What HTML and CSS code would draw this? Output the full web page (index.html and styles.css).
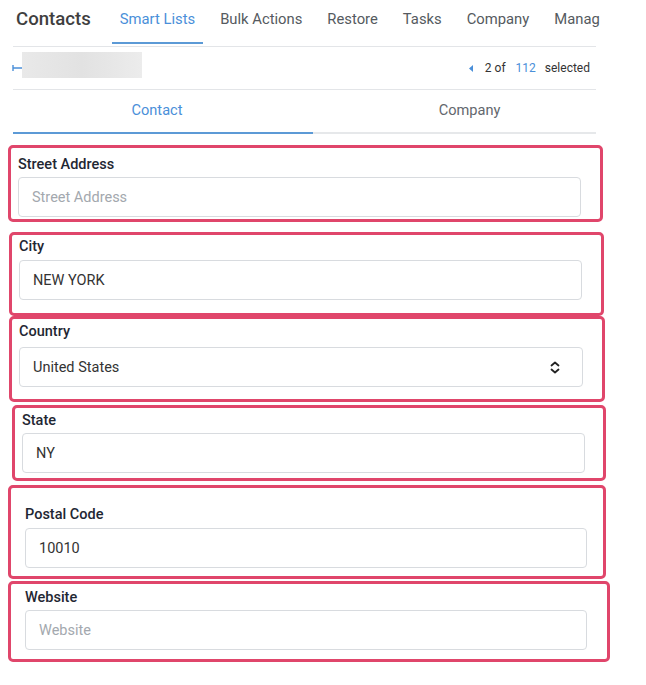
FILE: index.html
```html
<!DOCTYPE html>
<html lang="en">
<head>
<meta charset="utf-8">
<title>Contacts</title>
<link rel="stylesheet" href="styles.css">
</head>
<body>
<div class="page">
  <header class="topbar">
    <h1 class="brand">Contacts</h1>
    <nav class="nav">
      <a class="nav-item is-active">Smart Lists</a>
      <a class="nav-item">Bulk Actions</a>
      <a class="nav-item">Restore</a>
      <a class="nav-item">Tasks</a>
      <a class="nav-item">Company</a>
      <a class="nav-item nav-item-last">Manag</a>
    </nav>
  </header>

  <div class="subbar">
    <div class="subbar-left">
      <svg class="back-icon" width="11" height="8" viewBox="0 0 11 8"><path d="M1 1v6M1 4h9" stroke="#4a8fd9" stroke-width="1.4" fill="none"/></svg>
      <div class="blurred"></div>
    </div>
    <div class="pager">
      <svg class="pager-caret" width="4" height="7" viewBox="0 0 4 7"><path d="M4 0v7L0 3.5z" fill="#4a8fd9"/></svg>
      <span class="pager-text">2 of</span>
      <span class="pager-total">112</span>
      <span class="pager-text">selected</span>
    </div>
  </div>

  <div class="tabs">
    <div class="tab tab-left is-active">Contact</div>
    <div class="tab tab-right">Company</div>
  </div>
</div>

<div class="fields">
  <div class="field field-1">
    <label class="field-label">Street Address</label>
    <div class="input input-a"><span class="placeholder">Street Address</span></div>
  </div>
  <div class="field field-2">
    <label class="field-label">City</label>
    <div class="input input-a">NEW YORK</div>
  </div>
  <div class="field field-3">
    <label class="field-label">Country</label>
    <div class="input input-a select">
      <span>United States</span>
      <svg class="select-icon" width="10" height="13" viewBox="0 0 10 13"><path d="M1.5 4.5L5 1.5l3.5 3M1.5 8.5L5 11.5l3.5-3" stroke="#222" stroke-width="1.8" fill="none" stroke-linecap="round" stroke-linejoin="round"/></svg>
    </div>
  </div>
  <div class="field field-4">
    <label class="field-label">State</label>
    <div class="input input-b">NY</div>
  </div>
  <div class="field field-5">
    <label class="field-label">Postal Code</label>
    <div class="input input-c">10010</div>
  </div>
  <div class="field field-6">
    <label class="field-label">Website</label>
    <div class="input input-c"><span class="placeholder">Website</span></div>
  </div>
</div>
</body>
</html>
```

FILE: styles.css
```css
* { box-sizing: border-box; }
html, body { margin: 0; padding: 0; background: #ffffff; }
body {
  font-family: Roboto, "Liberation Sans", Arial, sans-serif;
  color: #333;
  width: 646px;
  height: 685px;
  overflow: hidden;
}

.page {
  width: 583px;
  margin-left: 13px;
}

/* top bar */
.topbar {
  display: flex;
  align-items: flex-start;
  height: 47px;
  border-bottom: 1px solid #e3e5e8;
}
.brand {
  margin: 0;
  padding: 7px 0 0 3px;
  font-size: 18.6px;
  line-height: 24px;
  font-weight: 500;
  color: #3f3f3f;
  white-space: nowrap;
}
.nav {
  display: flex;
  margin-left: 21px;
  gap: 9px;
  white-space: nowrap;
}
.nav-item {
  display: block;
  padding: 9px 8px 0;
  height: 44px;
  font-size: 14.8px;
  line-height: 21px;
  color: #555a60;
  border-bottom: 2px solid transparent;
}
.nav-item-last { padding-right: 0; }
.nav-item.is-active {
  color: #4a8fd9;
  border-bottom-color: #5c9ad6;
}

/* sub bar */
.subbar {
  display: flex;
  justify-content: space-between;
  align-items: flex-start;
  height: 43px;
  border-bottom: 1px solid #e3e5e8;
}
.subbar-left {
  display: flex;
  align-items: flex-start;
  margin-left: -1px;
  padding-top: 5px;
}
.back-icon { margin-top: 12px; }
.blurred {
  width: 120px;
  height: 26px;
  margin-left: -1px;
  background: linear-gradient(90deg, #e9e9e9 0%, #e2e2e2 50%, #ececec 100%);
}
.pager {
  display: flex;
  align-items: center;
  height: 42px;
  padding-right: 6px;
  font-size: 12px;
  color: #333;
}
.pager-caret { margin-right: 12px; }
.pager-total { color: #4a8fd9; margin: 0 9px 0 10px; }

/* tabs */
.tabs {
  display: grid;
  grid-template-columns: 300px 283px;
  height: 44px;
}
.tab {
  display: flex;
  align-items: center;
  justify-content: center;
  padding-bottom: 2px;
  font-size: 14.6px;
  color: #63676d;
  border-bottom: 2px solid #e6e8ea;
}
.tab.is-active {
  color: #4a8fd9;
  border-bottom-color: #5c9ad6;
}
.tab-left { padding-right: 12px; }
.tab-right { padding-left: 30px; }

/* fields */
.fields {
  padding-top: 11px;
}
.field {
  border: 3px solid #e0466b;
  border-radius: 5px;
}
.field-label {
  display: block;
  font-size: 14.5px;
  line-height: 20px;
  font-weight: 500;
  color: #1f2733;
}
.input {
  display: flex;
  align-items: center;
  height: 40px;
  padding-left: 13px;
  border: 1px solid #d8dbdf;
  border-radius: 4px;
  font-size: 14.5px;
  color: #333;
  background: #fff;
}
.placeholder { color: #a3a8ae; }
.select { justify-content: space-between; padding-right: 22px; }
.select-icon { display: block; }

.field-1 { margin: 0 43px 0 8px; padding: 7px 0 2px; }
.field-2 { margin: 10px 42px 0 9px; padding: 2px 0 13px; }
.field-3 { margin: 0 41px 0 9px; padding: 3px 0 12px; }
.field-4 { margin: 3px 40px 0 12px; padding: 3px 0 5px; }
.field-5 { margin: 4px 40px 0 8px; padding: 17px 0 8px; }
.field-6 { margin: 2px 36px 0 8px; padding: 4px 0 9px; }

.field-1 .field-label, .field-2 .field-label, .field-3 .field-label { padding-left: 7px; }
.field-4 .field-label { padding-left: 7px; }
.field-5 .field-label, .field-6 .field-label { padding-left: 14px; }

.field-1 .field-label { margin-bottom: 2px; }
.field-2 .field-label { margin-bottom: 3px; }
.field-3 .field-label { margin-bottom: 5px; }
.field-4 .field-label { margin-bottom: 2px; }
.field-5 .field-label { margin-bottom: 3px; }
.field-6 .field-label { margin-bottom: 2px; }

.input-a { margin: 0 19px 0 7px; }
.input-b { margin: 0 18px 0 7px; }
.input-c { margin: 0 16px 0 14px; }
.field-6 .input-c { margin-right: 20px; }
```
